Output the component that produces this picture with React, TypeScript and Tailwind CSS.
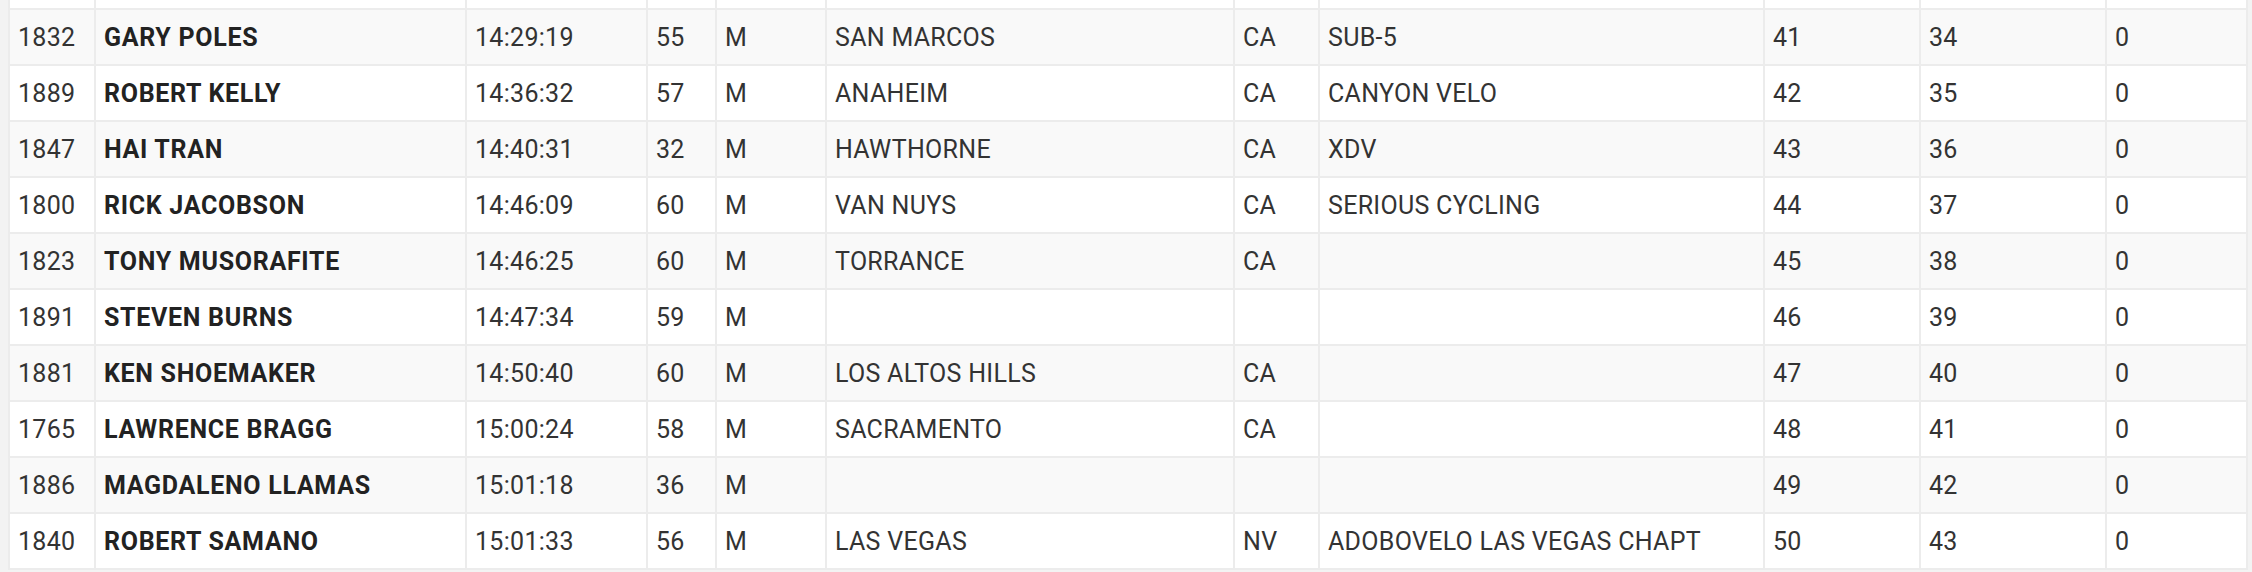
import React from "react";

const rows: string[][] = [
  ["1832", "GARY POLES", "14:29:19", "55", "M", "SAN MARCOS", "CA", "SUB-5", "41", "34", "0"],
  ["1889", "ROBERT KELLY", "14:36:32", "57", "M", "ANAHEIM", "CA", "CANYON VELO", "42", "35", "0"],
  ["1847", "HAI TRAN", "14:40:31", "32", "M", "HAWTHORNE", "CA", "XDV", "43", "36", "0"],
  ["1800", "RICK JACOBSON", "14:46:09", "60", "M", "VAN NUYS", "CA", "SERIOUS CYCLING", "44", "37", "0"],
  ["1823", "TONY MUSORAFITE", "14:46:25", "60", "M", "TORRANCE", "CA", "", "45", "38", "0"],
  ["1891", "STEVEN BURNS", "14:47:34", "59", "M", "", "", "", "46", "39", "0"],
  ["1881", "KEN SHOEMAKER", "14:50:40", "60", "M", "LOS ALTOS HILLS", "CA", "", "47", "40", "0"],
  ["1765", "LAWRENCE BRAGG", "15:00:24", "58", "M", "SACRAMENTO", "CA", "", "48", "41", "0"],
  ["1886", "MAGDALENO LLAMAS", "15:01:18", "36", "M", "", "", "", "49", "42", "0"],
  ["1840", "ROBERT SAMANO", "15:01:33", "56", "M", "LAS VEGAS", "NV", "ADOBOVELO LAS VEGAS CHAPT", "50", "43", "0"],
];

export default function App() {
  return (
    <div
      className="w-[2252px] h-[572px] bg-[#f3f3f3] pl-2 overflow-hidden"
      style={{ fontFamily: "Roboto, 'Liberation Sans', sans-serif" }}
    >
      <div className="w-[2240px] bg-[#ececec] px-[2px] pb-[2px] grid grid-cols-[84px_369px_179px_67px_108px_406px_83px_443px_154px_184px_139px] gap-[2px]">
        {Array.from({ length: 11 }).map((_, i) => (
          <div key={"top" + i} className="h-[8px] bg-white" />
        ))}
        {rows.map((r, ri) =>
          r.map((c, ci) => (
            <div
              key={ri + "-" + ci}
              className={`h-[54px] flex items-center pl-2 pt-[2px] text-[25px] whitespace-nowrap overflow-hidden ${
                ri % 2 === 0 ? "bg-[#f9f9f9]" : "bg-white"
              } ${ci === 1 ? "font-bold text-[#222] tracking-[0.7px]" : "text-[#333] tracking-[0.3px]"}`}
            >
              {c}
            </div>
          ))
        )}
      </div>
    </div>
  );
}
